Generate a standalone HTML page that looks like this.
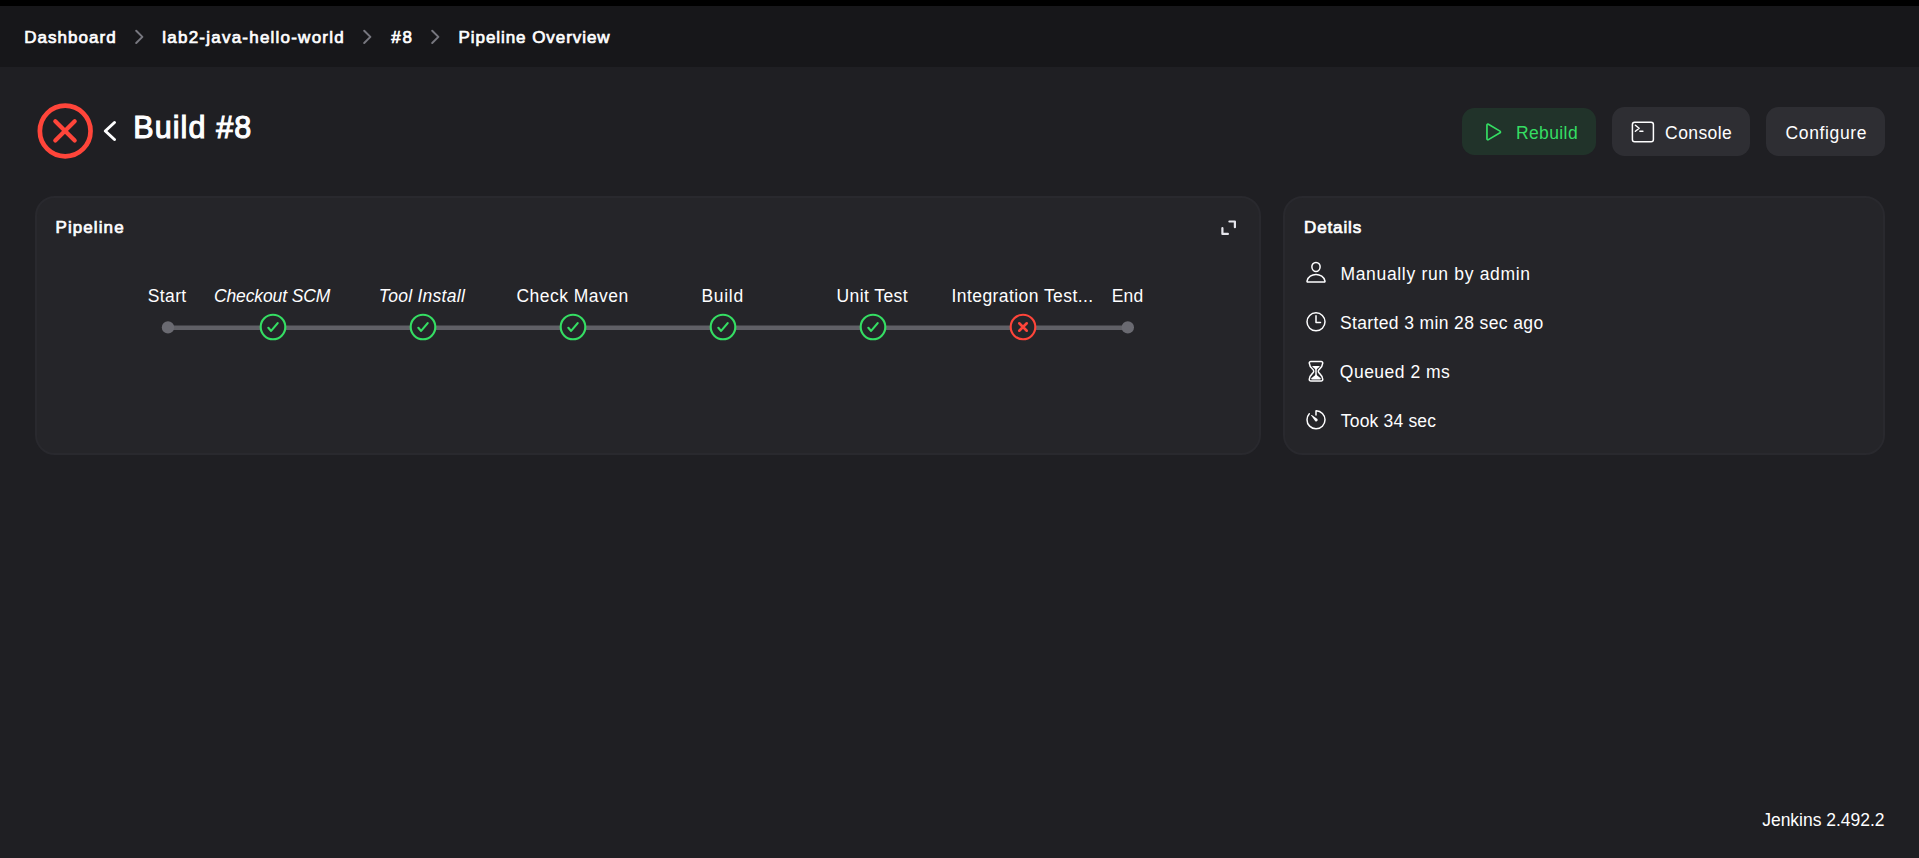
<!DOCTYPE html>
<html lang="en"><head><meta charset="utf-8"><title>lab2-java-hello-world #8 Pipeline Overview [Jenkins]</title>
<style>
html,body{margin:0;padding:0}
h1,h2{margin:0;padding:0;font-size:inherit;font-weight:normal}
body{width:1919px;height:858px;overflow:hidden;position:relative;background:#1f1f23;color:#fefeff;font-family:"Liberation Sans",sans-serif}
.topstrip{position:absolute;left:0;top:0;width:1919px;height:6px;background:#000}
.bar{position:absolute;left:0;top:6px;width:1919px;height:61px;background:#17171a}
.t{position:absolute;line-height:20px;white-space:nowrap;color:#fefeff}
.btn{position:absolute;border-radius:12.5px;background:#2e2e33}
.btn.primary{background:#21332a}
.card{position:absolute;top:196px;height:259px;box-sizing:border-box;border:2px solid #29292e;border-radius:20px;background:#252529}
.ov{position:absolute;left:0;top:0;pointer-events:none}
</style></head><body>
<div class="topstrip"></div>
<div class="bar"></div>
<div class="btn primary" style="left:1462px;top:107.5px;width:134px;height:47.5px"></div>
<div class="btn" style="left:1612px;top:107px;width:138px;height:49px"></div>
<div class="btn" style="left:1765.6px;top:107px;width:119.4px;height:49px"></div>
<div class="card" style="left:35px;width:1226px"></div>
<div class="card" style="left:1283px;width:602px"></div>
<svg class="ov" width="1919" height="858" viewBox="0 0 1919 858">
<!-- breadcrumb chevrons -->
<g fill="none" stroke="#77777f" stroke-width="2" stroke-linecap="round" stroke-linejoin="round">
<path d="M136.2 30.8l6.2 6.1-6.2 6.1"/><path d="M364.2 30.8l6.2 6.1-6.2 6.1"/><path d="M432.2 30.8l6.2 6.1-6.2 6.1"/>
</g>
<!-- status icon -->
<circle cx="65.2" cy="131" r="25.35" fill="none" stroke="#ff453a" stroke-width="4.7"/>
<path d="M55.3 121.2l19.4 19.4M74.7 121.2L55.3 140.6" fill="none" stroke="#ff453a" stroke-width="4.2" stroke-linecap="round"/>
<!-- back chevron -->
<path d="M114.5 122.5l-9.2 8.5 9.2 8.5" fill="none" stroke="#fefeff" stroke-width="3" stroke-linecap="round" stroke-linejoin="round"/>
<!-- rebuild play icon -->
<g transform="translate(1481.7,119.9) scale(0.046875)" fill="none" stroke="#35de63" stroke-width="36" stroke-miterlimit="10"><path d="M112 111v290c0 17.44 17 28.52 31 20.16l247.9-148.37c12.12-7.25 12.12-26.33 0-33.58L143 90.84c-14-8.36-31 2.72-31 20.16z"/></g>
<!-- console icon -->
<g transform="translate(1630.9,120) scale(0.046875)" fill="none" stroke="#fefeff" stroke-width="32" stroke-linecap="round" stroke-linejoin="round"><rect x="32" y="48" width="448" height="416" rx="48" ry="48"/><path d="M96 112l80 64-80 64M192 240h64"/></g>
<!-- expand icon -->
<path d="M1229.4 221.5h5.5v5.7M1227.9 233.9h-5.5v-5.7" fill="none" stroke="#e6e6ec" stroke-width="2.2" stroke-linecap="round" stroke-linejoin="round"/>
<!-- pipeline graph -->
<path d="M168 327.75H1128" stroke="#606066" stroke-width="4.3" fill="none"/>
<circle cx="168" cy="327.4" r="6.2" fill="#6a6a71"/><circle cx="1127.8" cy="327.4" r="6.2" fill="#6a6a71"/>
<g transform="translate(258,312.0) scale(0.05859375)"><circle cx="256" cy="256" r="210" fill="#252529" stroke="#35de63" stroke-width="36"/><path d="M336 189L224 323l-48-53.6" fill="none" stroke="#35de63" stroke-width="36" stroke-linecap="round" stroke-linejoin="round"/></g><g transform="translate(408,312.0) scale(0.05859375)"><circle cx="256" cy="256" r="210" fill="#252529" stroke="#35de63" stroke-width="36"/><path d="M336 189L224 323l-48-53.6" fill="none" stroke="#35de63" stroke-width="36" stroke-linecap="round" stroke-linejoin="round"/></g><g transform="translate(558,312.0) scale(0.05859375)"><circle cx="256" cy="256" r="210" fill="#252529" stroke="#35de63" stroke-width="36"/><path d="M336 189L224 323l-48-53.6" fill="none" stroke="#35de63" stroke-width="36" stroke-linecap="round" stroke-linejoin="round"/></g><g transform="translate(708,312.0) scale(0.05859375)"><circle cx="256" cy="256" r="210" fill="#252529" stroke="#35de63" stroke-width="36"/><path d="M336 189L224 323l-48-53.6" fill="none" stroke="#35de63" stroke-width="36" stroke-linecap="round" stroke-linejoin="round"/></g><g transform="translate(858,312.0) scale(0.05859375)"><circle cx="256" cy="256" r="210" fill="#252529" stroke="#35de63" stroke-width="36"/><path d="M336 189L224 323l-48-53.6" fill="none" stroke="#35de63" stroke-width="36" stroke-linecap="round" stroke-linejoin="round"/></g><g transform="translate(1008,312.0) scale(0.05859375)"><circle cx="256" cy="256" r="210" fill="#252529" stroke="#ff453a" stroke-width="36"/><path d="M320 320L192 192M192 320l128-128" fill="none" stroke="#ff453a" stroke-width="44" stroke-linecap="round" stroke-linejoin="round"/></g>
<!-- details icons -->
<g transform="translate(1304,260.3) scale(0.046875)" fill="none" stroke="#fefeff" stroke-width="32" stroke-linecap="round" stroke-linejoin="round"><path d="M344 144c-3.920 52.870-44 96-88 96s-84.150-43.120-88-96c-4-55 35-96 88-96s92 42 88 96z"/><path d="M256 304c-87 0-175.300 48-191.640 138.600C62.390 453.520 68.570 464 80 464h352c11.440 0 17.620-10.480 15.650-21.400C431.300 352 343 304 256 304z"/></g>
<g transform="translate(1304,309.8) scale(0.046875)" fill="none" stroke="#fefeff" stroke-width="32" stroke-linecap="round" stroke-linejoin="round"><path d="M256 64C150 64 64 150 64 256s86 192 192 192 192-86 192-192S362 64 256 64z"/><path d="M256 128v144h96"/></g>
<g transform="translate(1304,359.2) scale(0.046875)" fill="none" stroke="#fefeff" stroke-width="32" stroke-linecap="round" stroke-linejoin="round"><path d="M145.610 464h220.780c19.800 0 35.550-16.290 33.420-35.060C386.060 308 304 310 304 256s83.110-51 95.800-172.940c2-18.780-13.610-35.060-33.410-35.060H145.610c-19.800 0-35.370 16.280-33.410 35.060C124.890 205 208 201 208 256s-82.060 52-95.800 172.940c-2.140 18.770 13.610 35.060 33.410 35.060z"/><path stroke="none" fill="#fefeff" d="M343.300 432H169.130c-15.600 0-20-18-9-29.190C186.550 376 240 356.780 240 326V224c0-19.850-38-35-61.510-67.200-3.880-5.310-3.490-12.800 6.370-12.800h142.730c8.410 0 10.230 7.430 6.400 12.750C310.820 189 272 204.050 272 224v102c0 30.530 55.710 47 80.400 76.870 9.950 12.040 6.470 29.130-9.100 29.130z"/></g>
<g transform="translate(1304,407.8) scale(0.046875)" fill="none" stroke="#fefeff" stroke-width="32" stroke-linecap="round" stroke-linejoin="round"><path d="M112.910 128A191.850 191.850 0 0064 254c-1.180 106.350 85.650 193.800 192 194 106.200.2 192-85.830 192-192 0-104.540-83.550-189.610-187.500-192a4.360 4.360 0 00-4.500 4.370V152"/><path stroke="none" fill="#fefeff" d="M233.380 278.630l-79-113a8.130 8.130 0 0111.320-11.320l113 79a32.500 32.500 0 01-37.250 53.260 33.210 33.210 0 01-8.070-7.940z"/></g>
</svg>
<nav aria-label="breadcrumb">
<span class="t" style="left:24.3px;top:28.01px;font-size:17px;letter-spacing:1.025px;-webkit-text-stroke:0.7px #fefeff;">Dashboard</span>
<span class="t" style="left:162.3px;top:28.01px;font-size:17px;letter-spacing:1.225px;-webkit-text-stroke:0.7px #fefeff;">lab2-java-hello-world</span>
<span class="t" style="left:391.2px;top:28.01px;font-size:17px;letter-spacing:1.8px;-webkit-text-stroke:0.7px #fefeff;">#8</span>
<span class="t" style="left:458.5px;top:28.01px;font-size:17px;letter-spacing:0.938px;-webkit-text-stroke:0.7px #fefeff;">Pipeline Overview</span>
</nav>
<main>
<h1><span class="t" style="left:133.2px;top:117.33px;font-size:30.5px;letter-spacing:1.114px;-webkit-text-stroke:1.1px #fefeff;">Build #8</span></h1>
<div role="group">
<span class="t" style="left:1515.9px;top:122.54px;font-size:17.5px;letter-spacing:0.4px;color:#35de63;">Rebuild</span>
<span class="t" style="left:1665.1px;top:122.54px;font-size:17.5px;letter-spacing:0.4px;">Console</span>
<span class="t" style="left:1785.5px;top:122.54px;font-size:17.5px;letter-spacing:0.637px;">Configure</span>
</div>
<section aria-label="Pipeline">
<h2><span class="t" style="left:55.5px;top:218.11px;font-size:17px;letter-spacing:1.086px;-webkit-text-stroke:0.7px #fefeff;">Pipeline</span></h2>
<span class="t" style="left:147.75px;top:285.54px;font-size:17.5px;letter-spacing:0.375px;">Start</span>
<span class="t" style="left:214px;top:285.54px;font-size:17.5px;letter-spacing:-0.127px;font-style:italic;">Checkout SCM</span>
<span class="t" style="left:378.8px;top:285.54px;font-size:17.5px;letter-spacing:0.273px;font-style:italic;">Tool Install</span>
<span class="t" style="left:516.5px;top:285.54px;font-size:17.5px;letter-spacing:0.47px;">Check Maven</span>
<span class="t" style="left:701.5px;top:285.54px;font-size:17.5px;letter-spacing:0.675px;">Build</span>
<span class="t" style="left:836.5px;top:285.54px;font-size:17.5px;letter-spacing:0.412px;">Unit Test</span>
<span class="t" style="left:951.5px;top:285.54px;font-size:17.5px;letter-spacing:0.431px;">Integration Test...</span>
<span class="t" style="left:1111.75px;top:285.54px;font-size:17.5px;letter-spacing:0.175px;">End</span>
</section>
<section aria-label="Details">
<h2><span class="t" style="left:1304px;top:218.21px;font-size:17px;letter-spacing:0.883px;-webkit-text-stroke:0.7px #fefeff;">Details</span></h2>
<span class="t" style="left:1340.4px;top:263.94px;font-size:17.5px;letter-spacing:0.68px;">Manually run by admin</span>
<span class="t" style="left:1339.9px;top:312.94px;font-size:17.5px;letter-spacing:0.378px;">Started 3 min 28 sec ago</span>
<span class="t" style="left:1339.8px;top:361.74px;font-size:17.5px;letter-spacing:0.5px;">Queued 2 ms</span>
<span class="t" style="left:1340.8px;top:410.74px;font-size:17.5px;letter-spacing:0.18px;">Took 34 sec</span>
</section>
</main>
<footer>
<span class="t" style="left:1762.2px;top:809.54px;font-size:17.5px;letter-spacing:-0.014px;">Jenkins 2.492.2</span>
</footer>
</body></html>
